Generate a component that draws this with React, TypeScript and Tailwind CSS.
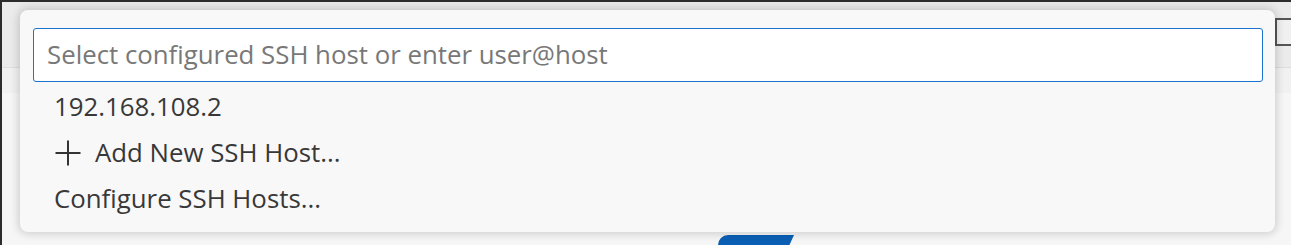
export default function App() {
  const items = [
    { id: "host", label: "192.168.108.2", icon: false },
    { id: "add", label: "Add New SSH Host...", icon: true },
    { id: "configure", label: "Configure SSH Hosts...", icon: false },
  ];

  return (
    <div
      className="relative w-[1291px] h-[245px] overflow-hidden bg-[#f3f3f3] border-l-2 border-t-2 border-[#2c2c2c]"
      style={{ fontFamily: '"Open Sans", "Noto Sans", sans-serif' }}
    >
      {/* backdrop: the editor window behind the quick pick */}
      <div className="flex flex-col h-full">
        <div className="h-[66px] bg-[#ebebeb] border-b border-[#dedede] flex justify-end items-start pt-[16px]">
          <div className="w-[16px] h-[28px] border-2 border-r-0 border-[#555] bg-[#f0f0f0]" />
        </div>
        <div className="h-[25px] bg-[#f1f1f1]" />
        <div className="flex-1 bg-[#f6f6f6]" />
      </div>

      {/* partially hidden blue button under the panel */}
      <div className="absolute left-[716px] top-[233px] w-[76px] h-[20px] rounded-l-[10px] bg-[#0a5fb4] [clip-path:polygon(0_0,100%_0,88%_100%,0_100%)]" />

      {/* quick pick */}
      <div className="absolute left-[18px] top-[8px] w-[1255px] h-[222px] rounded-[8px] bg-[#f8f8f8] shadow-[0_0_8px_2px_rgba(0,0,0,0.16)] pt-[18px] pl-[13px] pr-[12px] pb-[10px] flex flex-col">
        <div className="h-[55px] rounded-[3px] border border-[#1a73cf] bg-white flex items-center pl-[13px]">
          <span className="text-[25.8px] leading-none text-[#787878]">
            Select configured SSH host or enter user@host
          </span>
        </div>
        <div className="flex flex-col pt-[2px]">
          {items.map((item) => (
            <div key={item.id} className="h-[46px] flex items-center pl-[21px] text-[25.8px] leading-none text-[#383838]">
              {item.icon && (
                <svg width="28" height="28" viewBox="0 0 28 28" className="mr-[13px]">
                  <path d="M14 1.5V26.5M1.5 14H26.5" stroke="#333" strokeWidth="2" fill="none" />
                </svg>
              )}
              <span>{item.label}</span>
            </div>
          ))}
        </div>
      </div>
    </div>
  );
}
